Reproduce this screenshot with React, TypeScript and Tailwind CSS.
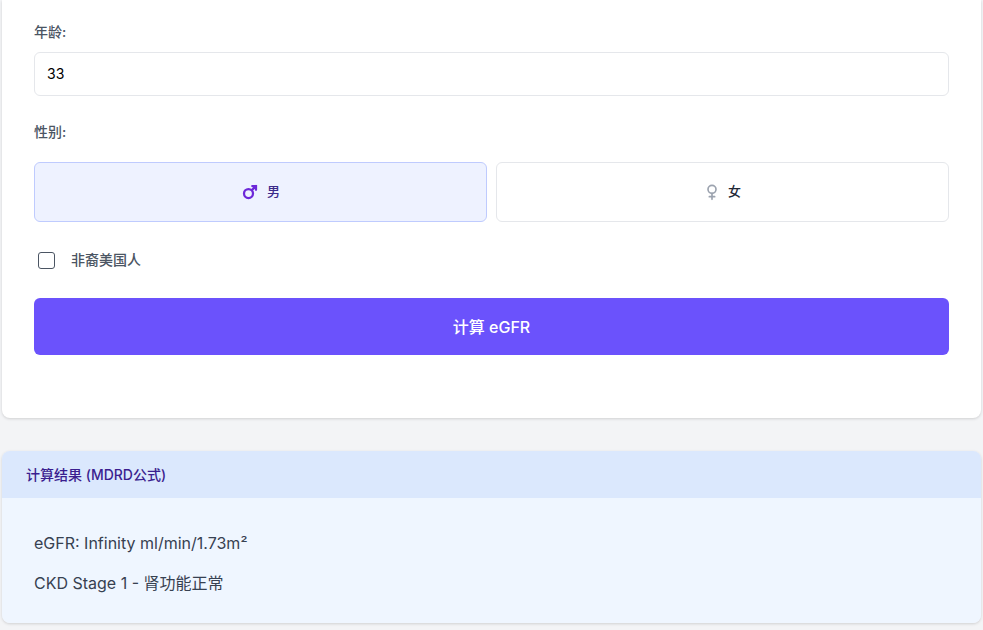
export default function App() {
  const f = { fontFamily: 'Inter, "Noto Sans CJK SC", sans-serif' };
  return (
    <div className="min-h-[630px] bg-[#f3f4f6] px-[2px] overflow-hidden" style={f}>
      <div className="bg-white rounded-b-lg shadow-[0_1px_3px_rgba(0,0,0,0.15)] px-8 pt-[22px] pb-[63px] flex flex-col">
        <label className="text-sm font-medium text-[#4b5563] mb-[10px] leading-5">年龄:</label>
        <div className="h-[44px] border border-[#e5e7eb] rounded-md flex items-center px-3 text-sm text-black">33</div>
        <label className="text-sm font-medium text-[#4b5563] mt-[26px] mb-[20px] leading-5">性别:</label>
        <div className="grid grid-cols-2 gap-[9px]">
          <div className="h-[60px] rounded-md border border-[#bfcbfe] bg-[#eef2ff] flex items-center justify-center gap-2 text-[13px] font-medium text-[#3b2a8a]">
            <svg width="18" height="18" viewBox="0 0 24 24" fill="none" stroke="#6d28d9" strokeWidth="3" strokeLinecap="round"><circle cx="10" cy="14" r="6"/><path d="M14.5 9.5 20 4M15 4h5v5"/></svg>
            男
          </div>
          <div className="h-[60px] rounded-md border border-[#e5e7eb] bg-white flex items-center justify-center gap-2 text-[13px] font-medium text-[#1f2937]">
            <svg width="16" height="18" viewBox="0 0 24 26" fill="none" stroke="#9ca3af" strokeWidth="2.5" strokeLinecap="round"><circle cx="12" cy="9" r="6"/><path d="M12 15v9M8 20h8"/></svg>
            女
          </div>
        </div>
        <div className="flex items-center gap-4 mt-[28px] ml-1">
          <div className="w-[17px] h-[17px] border border-[#4b5563] rounded-[3px]"></div>
          <span className="text-sm font-medium text-[#4b5563]">非裔美国人</span>
        </div>
        <div className="mt-[28px] h-[57px] rounded-md bg-[#6b52fc] flex items-center justify-center text-white font-medium text-base">计算 eGFR</div>
      </div>
      <div className="mt-[33px] rounded-lg overflow-hidden shadow-[0_1px_3px_rgba(0,0,0,0.15)]">
        <div className="h-[47px] bg-[#dbe8fd] flex items-center px-6 text-sm font-medium text-[#3b1e8f]">计算结果 (MDRD公式)</div>
        <div className="bg-[#eff6ff] px-8 pt-[33px] pb-[28px] text-base text-[#374151] flex flex-col gap-[16px] leading-6">
          <div>eGFR: Infinity ml/min/1.73m²</div>
          <div>CKD Stage 1 - 肾功能正常</div>
        </div>
      </div>
    </div>
  );
}
